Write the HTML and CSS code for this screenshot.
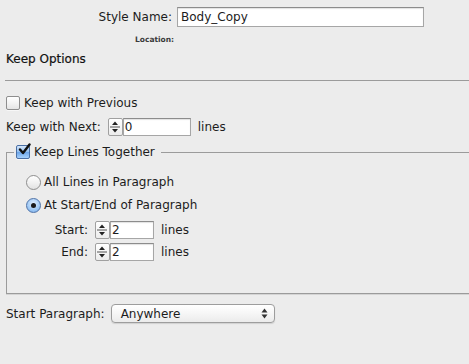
FILE: index.html
```html
<!DOCTYPE html>
<html lang="en">
<head>
  <meta charset="UTF-8" />
  <title>Paragraph Style Options - Keep Options</title>
  <link rel="stylesheet" href="styles.css">
</head>
<body>
  <div id="style-header">
    <div class="name-row">
      <span class="name-label">Style Name:</span>
      <div class="text-field name-field">Body_Copy</div>
    </div>
    <div class="location">Location:</div>
  </div>

  <div class="panel-title">Keep Options</div>
  <div class="panel-rule"></div>

  <div class="row row-prev">
    <span class="checkbox"></span>
    <span>Keep with Previous</span>
  </div>

  <div class="row row-next">
    <span>Keep with Next:</span>
    <span class="stepper">
      <svg width="14" height="18" viewBox="0 0 14 18">
        <path d="M4 7 L7 3.5 L10 7 Z" fill="#222"/>
        <line x1="2" y1="9" x2="12" y2="9" stroke="#555" stroke-width="1"/>
        <path d="M4 11 L7 14.5 L10 11 Z" fill="#222"/>
      </svg>
    </span>
    <div class="text-field num-field wide">0</div>
    <span class="unit">lines</span>
  </div>

  <fieldset class="keep-lines">
    <legend>
      <span class="checkbox checked">
        <svg width="14" height="14" viewBox="0 0 14 14">
          <path d="M3 6.5 L6 10 L12.5 1.5" fill="none" stroke="#111" stroke-width="2.4" stroke-linecap="round" stroke-linejoin="round"/>
        </svg>
      </span>
      <span>Keep Lines Together</span>
    </legend>

    <div class="row radio-row first">
      <span class="radio"></span>
      <span>All Lines in Paragraph</span>
    </div>
    <div class="row radio-row">
      <span class="radio selected"><span class="dot"></span></span>
      <span>At Start/End of Paragraph</span>
    </div>

    <div class="row count-row first">
      <span class="count-label">Start:</span>
      <span class="stepper">
        <svg width="14" height="18" viewBox="0 0 14 18">
          <path d="M4 7 L7 3.5 L10 7 Z" fill="#222"/>
          <line x1="2" y1="9" x2="12" y2="9" stroke="#555" stroke-width="1"/>
          <path d="M4 11 L7 14.5 L10 11 Z" fill="#222"/>
        </svg>
      </span>
      <div class="text-field num-field">2</div>
      <span class="unit">lines</span>
    </div>
    <div class="row count-row">
      <span class="count-label">End:</span>
      <span class="stepper">
        <svg width="14" height="18" viewBox="0 0 14 18">
          <path d="M4 7 L7 3.5 L10 7 Z" fill="#222"/>
          <line x1="2" y1="9" x2="12" y2="9" stroke="#555" stroke-width="1"/>
          <path d="M4 11 L7 14.5 L10 11 Z" fill="#222"/>
        </svg>
      </span>
      <div class="text-field num-field">2</div>
      <span class="unit">lines</span>
    </div>
  </fieldset>

  <div class="row start-row">
    <span>Start Paragraph:</span>
    <div class="popup">
      <span>Anywhere</span>
      <svg width="7" height="11" viewBox="0 0 7 11">
        <path d="M0.5 4.5 L3.5 0.5 L6.5 4.5 Z" fill="#333"/>
        <path d="M0.5 6.5 L3.5 10.5 L6.5 6.5 Z" fill="#333"/>
      </svg>
    </div>
  </div>
</body>
</html>
```

FILE: styles.css
```css
:root {
  --bg: #ececec;
  --text: #1c1c1c;
  --rule: #9b9b9b;
  --field-border: #a6a6a6;
}
body {
  margin: 0;
  padding: 0;
  width: 469px;
  height: 364px;
  overflow: hidden;
  background: var(--bg);
  color: var(--text);
  font-family: "DejaVu Sans", sans-serif;
  font-size: 12px;
}
#style-header {
  padding-top: 7px;
}
.name-row {
  display: flex;
  align-items: center;
  height: 20px;
}
.name-label {
  width: 172px;
  text-align: right;
  margin-right: 5px;
}
.text-field {
  box-sizing: border-box;
  background: #fff;
  border: 1px solid var(--field-border);
  border-top-color: #8c8c8c;
  box-shadow: inset 0 1px 1px rgba(0,0,0,0.12);
  display: flex;
  align-items: center;
  padding-left: 3px;
}
.name-field {
  width: 247px;
  height: 20px;
}
.location {
  margin-top: 7px;
  padding-left: 135px;
  font-size: 7.5px;
  font-weight: 600;
  color: #3a3a3a;
  height: 12px;
  line-height: 12px;
}
.panel-title {
  margin-top: 5px;
  padding-left: 6px;
  font-size: 12px;
  height: 16px;
  line-height: 16px;
  color: #111;
  -webkit-text-stroke: 0.2px #111;
}
.panel-rule {
  margin: 13px 0 0 5px;
  height: 1px;
  background: var(--rule);
}
.row {
  display: flex;
  align-items: center;
  gap: 4px;
  padding-left: 6px;
}
.row-prev {
  margin-top: 15px;
  height: 14px;
}
.row-next {
  margin-top: 8px;
  height: 18px;
  gap: 0;
}
.row-next > span:first-child {
  margin-right: 7px;
}
.checkbox {
  box-sizing: border-box;
  width: 14px;
  height: 14px;
  border: 1px solid #8e8e8e;
  border-radius: 2px;
  background: linear-gradient(#ffffff, #f3f3f3 50%, #e4e4e4);
  box-shadow: 0 1px 0 rgba(255,255,255,0.6);
  display: inline-flex;
  align-items: center;
  justify-content: center;
  position: relative;
}
.checkbox.checked {
  border-color: #4a6fa5;
  background: linear-gradient(#d6e7fb, #8fbdf0 50%, #6aa3e8 51%, #a6d0fb);
}
.checkbox.checked svg {
  position: absolute;
  left: 0;
  top: -3px;
}
.stepper {
  box-sizing: border-box;
  width: 15px;
  height: 18px;
  border: 1px solid #a0a0a0;
  border-radius: 2px;
  background: linear-gradient(#ffffff, #ececec);
  display: inline-flex;
}
.stepper svg {
  margin: -1px 0 0 -1px;
}
.num-field {
  height: 18px;
  padding-left: 1px;
}
.num-field.wide {
  width: 68px;
}
.count-row .num-field {
  width: 44px;
}
.unit {
  margin-left: 7px;
}
.keep-lines {
  margin: 8px 0 0 6px;
  padding: 0;
  border: 1px solid var(--rule);
  border-right: none;
  box-shadow: 0 1px 0 #d4d4d4;
  height: 150px;
  box-sizing: border-box;
}
.keep-lines legend {
  display: flex;
  align-items: center;
  gap: 4px;
  margin-left: 7px;
  padding: 0 6px 0 2px;
  height: 16px;
}
.radio-row {
  padding-left: 19px;
  height: 16px;
  gap: 3px;
}
.radio-row.first {
  margin-top: 14px;
}
.radio-row + .radio-row {
  margin-top: 7px;
}
.radio {
  box-sizing: border-box;
  width: 15px;
  height: 15px;
  border-radius: 50%;
  border: 1px solid #8e8e8e;
  background: linear-gradient(#ffffff, #f1f1f1 50%, #e2e2e2);
  display: inline-flex;
  align-items: center;
  justify-content: center;
}
.radio.selected {
  border-color: #4f73a8;
  background: radial-gradient(circle at 50% 35%, #e2efff, #9ec8f4 60%, #6fa6e6);
}
.radio .dot {
  width: 5px;
  height: 5px;
  border-radius: 50%;
  background: #1a1a1a;
}
.count-row {
  gap: 0;
  height: 18px;
  padding-left: 0;
}
.count-row.first {
  margin-top: 8px;
}
.count-row + .count-row {
  margin-top: 4px;
}
.count-label {
  width: 81px;
  text-align: right;
  margin-right: 7px;
}
.start-row {
  margin-top: 10px;
  height: 19px;
  gap: 6px;
}
.popup {
  box-sizing: border-box;
  width: 164px;
  height: 19px;
  border: 1px solid #9d9d9d;
  border-radius: 4px;
  background: linear-gradient(#ffffff, #f6f6f6 50%, #ebebeb);
  box-shadow: 0 1px 1px rgba(0,0,0,0.12);
  display: flex;
  align-items: center;
  justify-content: space-between;
  padding: 0 6px 0 9px;
}
```
